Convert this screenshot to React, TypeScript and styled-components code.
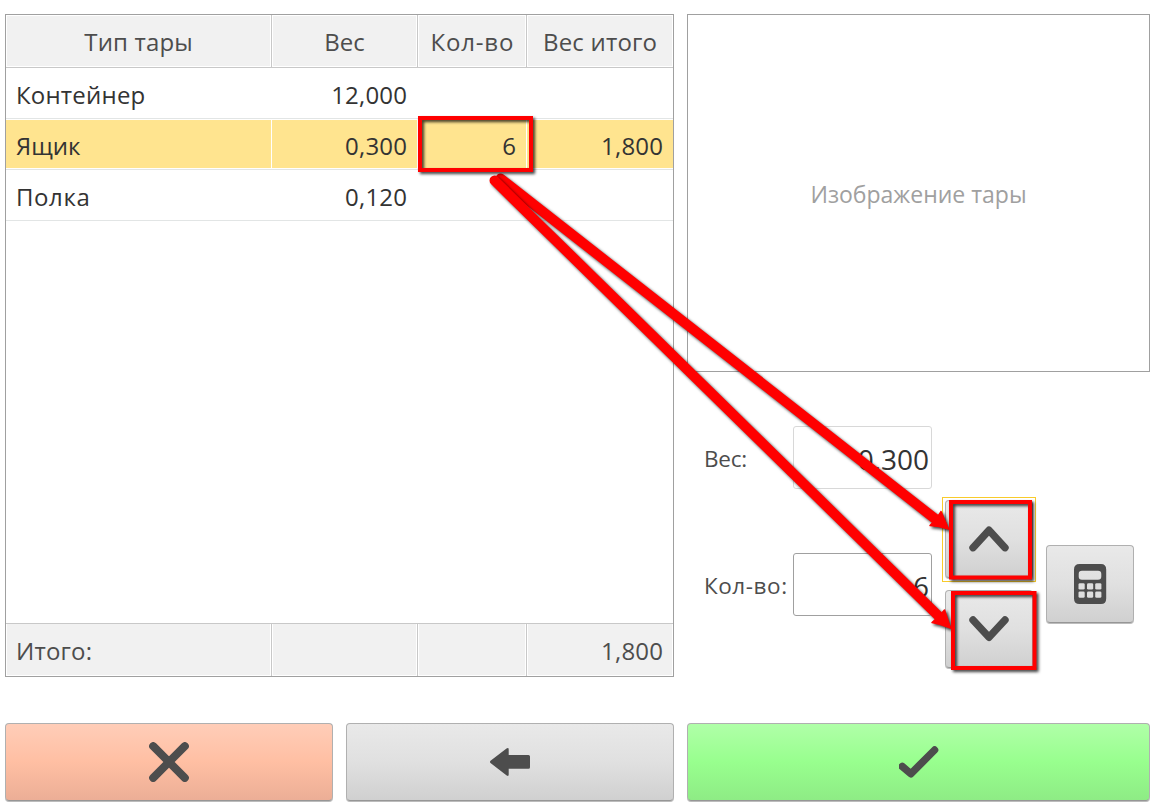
import React from "react";
import styled, { createGlobalStyle } from "styled-components";

const GlobalStyle = createGlobalStyle`
  * { box-sizing: border-box; }
  body { margin: 0; background: #fff; }
`;

const Page = styled.main`
  position: relative;
  display: flex;
  flex-direction: column;
  gap: 46px;
  width: 1160px;
  height: 806px;
  padding: 14px 10px 4px 5px;
  overflow: hidden;
  background: #fff;
  color: #333;
  font-family: "Open Sans", "Noto Sans", sans-serif;
  font-size: 24px;
`;

const Workspace = styled.div`
  display: grid;
  grid-template-columns: 669px 463px;
  gap: 13px;
  height: 663px;
`;

const Table = styled.section`
  display: flex;
  flex-direction: column;
  border: 1px solid #a0a0a0;
  background: #fff;
`;

const columns = "266px 146px 109px 146px";

const HeaderRow = styled.div`
  display: grid;
  grid-template-columns: ${columns};
  height: 53px;
  border-bottom: 1px solid #c8c8c8;
`;

const HeaderCell = styled.div`
  display: flex;
  align-items: center;
  justify-content: center;
  padding-top: 1px;
  border-right: 1px solid #c8c8c8;
  background: #f1f1f1;
  box-shadow: inset 0 0 0 1px #fff;
  color: #4d4d4d;
  &:last-child { border-right: 0; }
`;

const Row = styled.div<{ $selected?: boolean }>`
  display: grid;
  grid-template-columns: ${columns};
  height: 51px;
  padding: ${(p) => (p.$selected ? "1px 0" : "0")};
  border-bottom: 1px solid #e2e5e5;
  background: #fff;
  & > * { background: ${(p) => (p.$selected ? "#ffe48f" : "#fff")}; }
`;

const Cell = styled.div<{ $align?: "left" | "right" }>`
  display: flex;
  align-items: center;
  justify-content: ${(p) => (p.$align === "left" ? "flex-start" : "flex-end")};
  padding: 2px 10px 0;
  border-right: 1px solid #fff;
  &:last-child { border-right: 0; }
`;

const FooterRow = styled(HeaderRow)`
  margin-top: auto;
  border-bottom: 0;
  border-top: 1px solid #c8c8c8;
`;

const FooterCell = styled(HeaderCell)<{ $align?: "left" | "right" }>`
  justify-content: ${(p) => (p.$align === "left" ? "flex-start" : "flex-end")};
  padding: 1px 10px 0;
  box-shadow: inset 1px -1px 0 #fff, inset -1px 0 0 #fff;
`;

const Text = styled.span<{ $spacing?: number }>`
  white-space: nowrap;
  letter-spacing: ${(p) => p.$spacing ?? 0}px;
  margin-right: ${(p) => -(p.$spacing ?? 0)}px;
`;

const Side = styled.aside`
  display: flex;
  flex-direction: column;
`;

const ImageBox = styled.div`
  display: flex;
  align-items: center;
  justify-content: center;
  height: 358px;
  padding-top: 1px;
  border: 1px solid #a0a0a0;
  color: #a0a0a0;
  font-size: 23px;
`;

const Editor = styled.div`
  display: grid;
  grid-template-columns: 89px 139px 13px 88px 13px 88px;
  padding: 54px 0 0 17px;
`;

const Fields = styled.div`
  display: grid;
  grid-column: 1 / 3;
  grid-template-columns: 89px 139px;
  grid-template-rows: 63px 63px;
  row-gap: 64px;
`;

const Label = styled.label`
  display: flex;
  align-items: center;
  padding-top: 1px;
  color: #4d4d4d;
  font-size: 22.5px;
`;

const Field = styled.div<{ $readOnly?: boolean }>`
  display: flex;
  align-items: center;
  justify-content: flex-end;
  padding: 3px 2px 0;
  border: 1px solid ${(p) => (p.$readOnly ? "#d8d8d8" : "#a0a0a0")};
  border-radius: 3px;
  font-size: 28px;
`;

const Stepper = styled.div`
  display: flex;
  grid-column: 4;
  flex-direction: column;
  gap: 11px;
  padding-top: 74px;
`;

const CalcSlot = styled.div`
  grid-column: 6;
  padding-top: 119px;
`;

const tones = {
  grey: "#e9e9e9, #e0e0e0 50%, #d0d0d0",
  red: "#ffcdb8, #ffbfa3 50%, #ecae96",
  green: "#b0ffa8, #98ff8e 50%, #8eec85",
};

const Button = styled.button<{ $tone?: keyof typeof tones }>`
  display: flex;
  align-items: center;
  justify-content: center;
  width: 100%;
  height: 78px;
  padding: 0;
  border: 1px solid #b0b0b0;
  border-bottom-color: #969696;
  border-radius: 4px;
  background: linear-gradient(${(p) => tones[p.$tone ?? "grey"]});
  box-shadow: 0 1px 0 #bcbcbc;
`;

const FocusFrame = styled.div`
  margin: -3px;
  padding: 2px 2px 3px;
  border: 1px solid #f8cb2c;
`;

const Actions = styled.footer`
  display: grid;
  grid-template-columns: 328px 328px 463px;
  gap: 13px;
`;

const Icon = styled.svg`
  display: block;
  width: 40px;
  height: 40px;
  fill: none;
  stroke: #4d4d4d;
  stroke-width: 7.4;
  stroke-linecap: round;
  stroke-linejoin: round;
`;

const Callouts = styled.svg`
  position: absolute;
  inset: 0;
  width: 1160px;
  height: 806px;
  pointer-events: none;
  fill: none;
  stroke: #f00;
  & > * { filter: drop-shadow(2px 2px 1.5px rgba(0, 0, 0, 0.75)); }
`;

const rows = [
  { name: "Контейнер", weight: "12,000", count: "", total: "", spacing: 0.2 },
  { name: "Ящик", weight: "0,300", count: "6", total: "1,800", spacing: 0, selected: true },
  { name: "Полка", weight: "0,120", count: "", total: "", spacing: 0.6 },
];

const Chevron = ({ down }: { down?: boolean }) => (
  <Icon viewBox="0 0 40 40">
    <path d={down ? "M4 11 L20 28.3 L36 11" : "M4 28.7 L20 11.2 L36 28.7"} />
  </Icon>
);

export default function App() {
  return (
    <>
      <GlobalStyle />
      <Page>
        <Workspace>
          <Table>
            <HeaderRow>
              <HeaderCell><Text $spacing={0.15}>Тип тары</Text></HeaderCell>
              <HeaderCell><Text>Вес</Text></HeaderCell>
              <HeaderCell><Text $spacing={0.8}>Кол-во</Text></HeaderCell>
              <HeaderCell><Text $spacing={0.2}>Вес итого</Text></HeaderCell>
            </HeaderRow>
            {rows.map((r) => (
              <Row key={r.name} $selected={r.selected}>
                <Cell $align="left"><Text $spacing={r.spacing}>{r.name}</Text></Cell>
                <Cell><Text $spacing={0.2}>{r.weight}</Text></Cell>
                <Cell><Text>{r.count}</Text></Cell>
                <Cell><Text $spacing={0.2}>{r.total}</Text></Cell>
              </Row>
            ))}
            <FooterRow>
              <FooterCell $align="left"><Text $spacing={0.2}>Итого:</Text></FooterCell>
              <FooterCell />
              <FooterCell />
              <FooterCell><Text $spacing={0.2}>1,800</Text></FooterCell>
            </FooterRow>
          </Table>
          <Side>
            <ImageBox><Text>Изображение тары</Text></ImageBox>
            <Editor>
              <Fields>
                <Label><Text $spacing={-0.2}>Вес:</Text></Label>
                <Field $readOnly><Text>0,300</Text></Field>
                <Label><Text $spacing={0.55}>Кол-во:</Text></Label>
                <Field><Text>6</Text></Field>
              </Fields>
              <Stepper>
                <FocusFrame><Button><Chevron /></Button></FocusFrame>
                <Button><Chevron down /></Button>
              </Stepper>
              <CalcSlot>
                <Button>
                  <Icon viewBox="0 0 40 40">
                    <path
                      fill="#4d4d4d"
                      fillRule="evenodd"
                      stroke="none"
                      d="M9.5 0H31Q36.2 0 36.2 5.5V34.5Q36.2 40 31 40H9.5Q4 40 4 34.5V5.5Q4 0 9.5 0ZM12 6.7Q8.7 6.7 8.7 10V12.5Q8.7 15.8 12 15.8H28Q31.3 15.8 31.3 12.5V10Q31.3 6.7 28 6.7Z"
                    />
                    <g fill="#dedede" stroke="none">
                      {[8.5, 17, 25.2].map((x) =>
                        [19.2, 27.4].map((y) => (
                          <rect key={`${x}-${y}`} x={x} y={y} width="6.2" height="6.4" rx="1.4" />
                        ))
                      )}
                    </g>
                  </Icon>
                </Button>
              </CalcSlot>
            </Editor>
          </Side>
        </Workspace>
        <Actions>
          <Button $tone="red">
            <Icon viewBox="0 0 40 40"><path strokeWidth="8" d="M4.2 4.2 L35.8 35.8 M35.8 4.2 L4.2 35.8" /></Icon>
          </Button>
          <Button>
            <Icon viewBox="0 0 40 40">
              <path
                fill="#4d4d4d"
                stroke="none"
                d="M.5 18.8L16.5 6.6Q18.7 5.2 18.7 7.5V13H38.5Q40 13 40 14.5V25.2Q40 26.7 38.5 26.7H18.7V32.5Q18.7 34.7 16.7 33.4L.5 21Q-.5 19.9 .5 18.8Z"
              />
            </Icon>
          </Button>
          <Button $tone="green">
            <Icon viewBox="0 0 40 40"><path d="M3.2 24.4 L11.8 31.8 L35.6 8" /></Icon>
          </Button>
        </Actions>
        <Callouts viewBox="0 0 1160 806">
          <g>
            <path d="M500.5 178.5L936 519.5" strokeWidth="10" strokeLinecap="round" />
            <path d="M948.5 529L941 511.5Q937 519 930 525.5Q939 526 948.5 529Z" fill="#f00" strokeWidth="1.5" strokeLinejoin="round" />
          </g>
          <g>
            <path d="M494.5 180.5L939 616.5" strokeWidth="10" strokeLinecap="round" />
            <path d="M950.5 628L944.5 610Q939 617 932 622.5Q941 624 950.5 628Z" fill="#f00" strokeWidth="1.5" strokeLinejoin="round" />
          </g>
          <rect x="420" y="118" width="111" height="52" strokeWidth="4" />
          <rect x="951" y="502" width="79" height="75.5" strokeWidth="4" />
          <rect x="953" y="593" width="81.5" height="75" strokeWidth="4" />
        </Callouts>
      </Page>
    </>
  );
}
